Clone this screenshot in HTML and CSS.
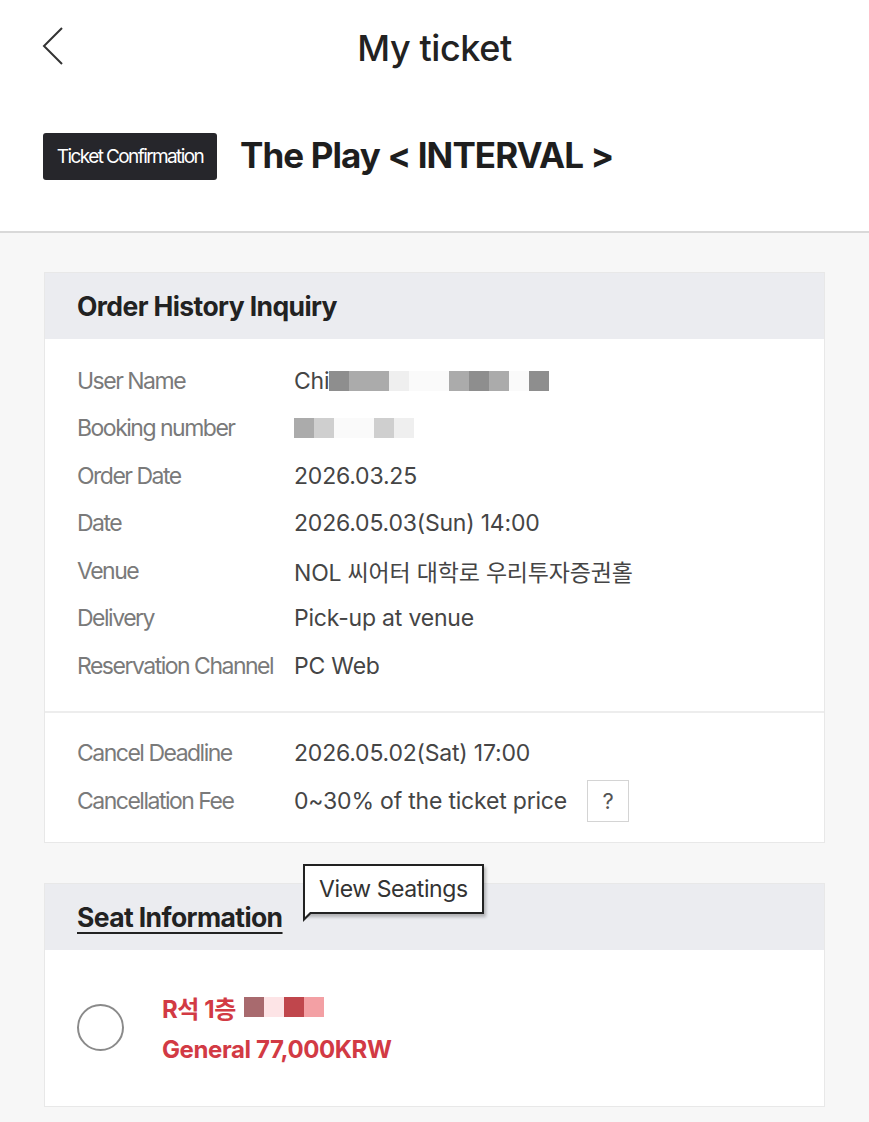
FILE: index.html
```html
<!DOCTYPE html>
<html lang="en">
<head>
<meta charset="utf-8">
<title>My ticket</title>
<link rel="stylesheet" href="styles.css">
</head>
<body>
<div class="page">
  <header class="top">
    <div class="topbar">
      <svg class="back" width="24" height="40" viewBox="0 0 24 40" aria-hidden="true">
        <polyline points="20,2 2,20 20,38" fill="none" stroke="#333" stroke-width="2"/>
      </svg>
      <h1 class="page-title">My ticket</h1>
    </div>
    <div class="title-row">
      <span class="badge">Ticket Confirmation</span>
      <h2 class="show-title">The Play &lt; INTERVAL &gt;</h2>
    </div>
  </header>

  <main class="content">
    <section class="card">
      <div class="card-head"><h3 class="card-title">Order History Inquiry</h3></div>
      <div class="card-body">
        <div class="row"><span class="label">User Name</span><span class="value">Chi<span class="redact"><i class="b1"></i><i class="b2"></i><i class="b2"></i><i class="b4"></i><i class="gap"></i><i class="b2"></i><i class="b1"></i><i class="b2"></i><i class="gap2"></i><i class="b1"></i></span></span></div>
        <div class="row"><span class="label">Booking number</span><span class="value"><span class="redact"><i class="b2"></i><i class="b3"></i><i class="gap"></i><i class="b3"></i><i class="b4"></i></span></span></div>
        <div class="row"><span class="label">Order Date</span><span class="value">2026.03.25</span></div>
        <div class="row"><span class="label">Date</span><span class="value">2026.05.03(Sun) 14:00</span></div>
        <div class="row"><span class="label">Venue</span><span class="value">NOL 씨어터 대학로 우리투자증권홀</span></div>
        <div class="row"><span class="label">Delivery</span><span class="value">Pick-up at venue</span></div>
        <div class="row"><span class="label">Reservation Channel</span><span class="value">PC Web</span></div>
      </div>
      <div class="card-body sep">
        <div class="row"><span class="label">Cancel Deadline</span><span class="value">2026.05.02(Sat) 17:00</span></div>
        <div class="row"><span class="label">Cancellation Fee</span><span class="value">0~30% of the ticket price <span class="help">?</span></span></div>
      </div>
    </section>

    <section class="card">
      <div class="card-head seat-head">
        <h3 class="card-title underline">Seat Information</h3>
        <div class="tip">View Seatings</div>
      </div>
      <div class="seat-body">
        <span class="radio"></span>
        <div class="seat-text">
          <div class="seat-line">R석 1층<span class="redact red"><i class="r1"></i><i class="r3"></i><i class="r2"></i><i class="r4"></i></span></div>
          <div class="seat-line">General 77,000KRW</div>
        </div>
      </div>
    </section>
  </main>
</div>
</body>
</html>
```

FILE: styles.css
```css
* { box-sizing: border-box; }
html, body { margin: 0; padding: 0; }
body {
  font-family: Inter, "Noto Sans", "Noto Sans CJK KR", sans-serif;
  background: #f7f7f7;
  color: #222;
}
.page { width: 869px; min-height: 1122px; }

.top {
  background: #fff;
  border-bottom: 2px solid #d9d9d9;
  height: 233px;
}
.topbar {
  height: 95px;
  display: flex;
  align-items: center;
  justify-content: center;
  position: relative;
}
.back {
  position: absolute;
  left: 42px;
  top: 26px;
}
.page-title {
  margin: 0;
  font-size: 36px;
  font-weight: 500;
  color: #222;
  letter-spacing: -0.4px;
}
.title-row {
  display: flex;
  align-items: center;
  gap: 23px;
  padding: 38px 43px 0;
}
.badge {
  background: #26262b;
  color: #fff;
  border-radius: 3px;
  height: 47px;
  width: 174px;
  display: flex;
  align-items: center;
  justify-content: center;
  font-size: 19px;
  letter-spacing: -1.6px;
}
.show-title {
  margin: 0 0 4px;
  font-size: 35px;
  font-weight: 700;
  letter-spacing: -0.9px;
  color: #1e1e1e;
}

.content {
  padding: 39px 44px 0;
  display: flex;
  flex-direction: column;
  gap: 40px;
}
.card {
  background: #fff;
  border: 1px solid #e8e8e8;
}
.card-head {
  background: #ebecf0;
  height: 66px;
  display: flex;
  align-items: center;
  padding: 0 32px;
}
.card-title {
  margin: 0;
  font-size: 26.5px;
  font-weight: 700;
  letter-spacing: -0.6px;
  color: #222;
}
.card-title.underline { text-decoration: underline; text-underline-offset: 5px; text-decoration-thickness: 2px; }

.card-body {
  padding: 18px 32px 21px;
}
.card-body.sep {
  border-top: 2px solid #ededed;
  padding: 17px 32px 17px;
}
.row {
  display: flex;
  align-items: center;
  height: 47.5px;
}
.label {
  width: 217px;
  flex: none;
  font-size: 23px;
  color: #7a7a7a;
  letter-spacing: -1.5px;
}
.value {
  font-size: 23px;
  color: #454545;
  letter-spacing: -0.2px;
  display: flex;
  align-items: center;
}
.redact { display: inline-flex; align-items: center; height: 20px; }
.redact i { display: block; width: 20px; height: 20px; }
.redact .b1 { background: #8e8e8e; }
.redact .b2 { background: #ababab; }
.redact .b3 { background: #cfcfcf; }
.redact .b4 { background: #efefef; }
.redact .gap { width: 40px; background: #fafafa; }
.redact .gap2 { width: 20px; background: #fafafa; }
.help {
  margin-left: 20px;
  width: 42px;
  height: 42px;
  border: 1px solid #d4d4d4;
  display: flex;
  align-items: center;
  justify-content: center;
  font-size: 22px;
  color: #555;
}

.seat-head { position: relative; }
.tip {
  position: absolute;
  left: 258px;
  top: -20px;
  height: 50px;
  padding: 0 14px;
  display: flex;
  align-items: center;
  background: #fff;
  border: 2px solid #222;
  font-size: 23px;
  color: #333;
  letter-spacing: -0.4px;
  box-shadow: 2px 3px 3px rgba(0,0,0,0.25);
}
.tip::after {
  content: "";
  position: absolute;
  left: -2px;
  bottom: -10px;
  width: 0; height: 0;
  border-left: 10px solid #222;
  border-bottom: 10px solid transparent;
}
.tip::before {
  content: "";
  position: absolute;
  left: 0px;
  bottom: -5px;
  width: 0; height: 0;
  border-left: 6px solid #fff;
  border-bottom: 6px solid transparent;
  z-index: 1;
}
.seat-body {
  height: 156px;
  display: flex;
  align-items: center;
  padding: 0 32px;
  gap: 38px;
}
.radio {
  width: 47px;
  height: 47px;
  border: 2px solid #8a8a8a;
  border-radius: 50%;
  flex: none;
}
.seat-text { display: flex; flex-direction: column; gap: 10px; margin-top: 1px; }
.seat-line {
  font-size: 24px;
  font-weight: 700;
  color: #d23a44;
  letter-spacing: -0.4px;
  display: flex;
  align-items: center;
  height: 32px;
}
.redact.red { margin-left: 8px; }
.redact.red i { width: 20px; height: 20px; }
.redact .r1 { background: #a86a6e; }
.redact .r2 { background: #c0464c; }
.redact .r3 { background: #fde4e6; }
.redact .r4 { background: #f3a0a4; }
```
